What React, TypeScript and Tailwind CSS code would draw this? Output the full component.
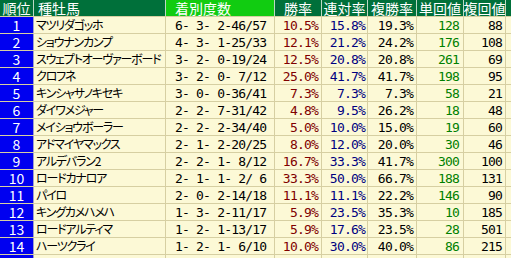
import React from 'react';

interface Row {
  no: number;
  name: string;
  record: string;
  win: string;
  quinella: string;
  place: string;
  winRet: string;
  placeRet: string;
}

const rows: Row[] = [
  { no: 1, name: 'マツリダゴッホ', record: '6- 3- 2-46/57', win: '10.5%', quinella: '15.8%', place: '19.3%', winRet: '128', placeRet: '88' },
  { no: 2, name: 'ショウナンカンプ', record: '4- 3- 1-25/33', win: '12.1%', quinella: '21.2%', place: '24.2%', winRet: '176', placeRet: '108' },
  { no: 3, name: 'スウェプトオーヴァーボード', record: '3- 2- 0-19/24', win: '12.5%', quinella: '20.8%', place: '20.8%', winRet: '261', placeRet: '69' },
  { no: 4, name: 'クロフネ', record: '3- 2- 0- 7/12', win: '25.0%', quinella: '41.7%', place: '41.7%', winRet: '198', placeRet: '95' },
  { no: 5, name: 'キンシャサノキセキ', record: '3- 0- 0-36/41', win: '7.3%', quinella: '7.3%', place: '7.3%', winRet: '58', placeRet: '21' },
  { no: 6, name: 'ダイワメジャー', record: '2- 2- 7-31/42', win: '4.8%', quinella: '9.5%', place: '26.2%', winRet: '18', placeRet: '48' },
  { no: 7, name: 'メイショウボーラー', record: '2- 2- 2-34/40', win: '5.0%', quinella: '10.0%', place: '15.0%', winRet: '19', placeRet: '60' },
  { no: 8, name: 'アドマイヤマックス', record: '2- 1- 2-20/25', win: '8.0%', quinella: '12.0%', place: '20.0%', winRet: '30', placeRet: '46' },
  { no: 9, name: 'アルデバラン2', record: '2- 2- 1- 8/12', win: '16.7%', quinella: '33.3%', place: '41.7%', winRet: '300', placeRet: '100' },
  { no: 10, name: 'ロードカナロア', record: '2- 1- 1- 2/ 6', win: '33.3%', quinella: '50.0%', place: '66.7%', winRet: '188', placeRet: '131' },
  { no: 11, name: 'パイロ', record: '2- 0- 2-14/18', win: '11.1%', quinella: '11.1%', place: '22.2%', winRet: '146', placeRet: '90' },
  { no: 12, name: 'キングカメハメハ', record: '1- 3- 2-11/17', win: '5.9%', quinella: '23.5%', place: '35.3%', winRet: '10', placeRet: '185' },
  { no: 13, name: 'ロードアルティマ', record: '1- 2- 1-13/17', win: '5.9%', quinella: '17.6%', place: '23.5%', winRet: '28', placeRet: '501' },
  { no: 14, name: 'ハーツクライ', record: '1- 2- 1- 6/10', win: '10.0%', quinella: '30.0%', place: '40.0%', winRet: '86', placeRet: '215' },
];

const jp = "font-['Noto_Sans_CJK_JP',sans-serif]";
const mono = "font-['DejaVu_Sans_Mono','Noto_Sans_CJK_JP',monospace] text-[13px] leading-none tracking-[-0.8px] whitespace-pre";
const cell = 'h-full flex items-center border-r border-[#d6cfa2] bg-[#fcf9d6]';
const head = 'h-full flex items-center overflow-hidden whitespace-nowrap border-r border-[#bcd8c4]';

export default function App() {
  return (
    <div className="w-[511px] h-[258px] overflow-hidden bg-[#fcf9d6]">
      {/* header */}
      <div className={`flex h-[17px] border-b border-[#d6cfa2] text-white text-[14px] leading-none ${jp}`}>
        <div className={`w-[34px] justify-center bg-[#00703a] ${head}`}>順位</div>
        <div className={`w-[132px] pl-[4px] bg-[#00703a] ${head}`}>種牡馬</div>
        <div className={`w-[109px] pl-[9px] bg-[#11cc11] ${head}`}>着別度数</div>
        <div className={`w-[47px] justify-center bg-[#00703a] ${head}`}>勝率</div>
        <div className={`w-[46px] justify-center bg-[#00703a] ${head}`}>連対率</div>
        <div className={`w-[49px] justify-center bg-[#00703a] ${head}`}>複勝率</div>
        <div className={`w-[47px] justify-center bg-[#00703a] ${head}`}>単回値</div>
        <div className={`w-[42px] justify-center bg-[#00703a] ${head}`}>複回値</div>
        <div className="flex-1 h-full bg-[#00703a]" />
      </div>

      {rows.map((r) => (
        <div key={r.no} className="flex h-[17px] border-b border-[#d6cfa2]">
          <div className={`w-[34px] h-full flex items-center justify-center bg-[#0000f0] border-r border-[#a0a0c8] text-white text-[14px] leading-none ${jp}`}>
            {r.no}
          </div>
          <div className={`w-[132px] pl-[2px] overflow-hidden whitespace-nowrap text-[12px] leading-none tracking-[-1.2px] text-black [font-feature-settings:'palt'] ${cell} ${jp}`}>
            {r.name}
          </div>
          <div className={`w-[109px] pl-[9px] text-black ${cell} ${mono}`}>{r.record}</div>
          <div className={`w-[47px] justify-end pr-[3px] text-[#800000] ${cell} ${mono}`}>{r.win}</div>
          <div className={`w-[46px] justify-end pr-[2px] text-[#000080] ${cell} ${mono}`}>{r.quinella}</div>
          <div className={`w-[49px] justify-end pr-[3px] text-black ${cell} ${mono}`}>{r.place}</div>
          <div className={`w-[47px] justify-end pr-[4px] text-[#008000] ${cell} ${mono}`}>{r.winRet}</div>
          <div className={`w-[42px] justify-end pr-[3px] text-black ${cell} ${mono}`}>{r.placeRet}</div>
          <div className="flex-1 h-full bg-[#fcf9d6]" />
        </div>
      ))}

      {/* partially visible empty row */}
      <div className="flex h-[17px]">
        <div className="w-[34px] h-full bg-[#0000f0] border-r border-[#a0a0c8]" />
        <div className={`w-[132px] ${cell}`} />
        <div className={`w-[109px] ${cell}`} />
        <div className={`w-[47px] ${cell}`} />
        <div className={`w-[46px] ${cell}`} />
        <div className={`w-[49px] ${cell}`} />
        <div className={`w-[47px] ${cell}`} />
        <div className={`w-[42px] ${cell}`} />
        <div className="flex-1 h-full bg-[#fcf9d6]" />
      </div>
    </div>
  );
}
